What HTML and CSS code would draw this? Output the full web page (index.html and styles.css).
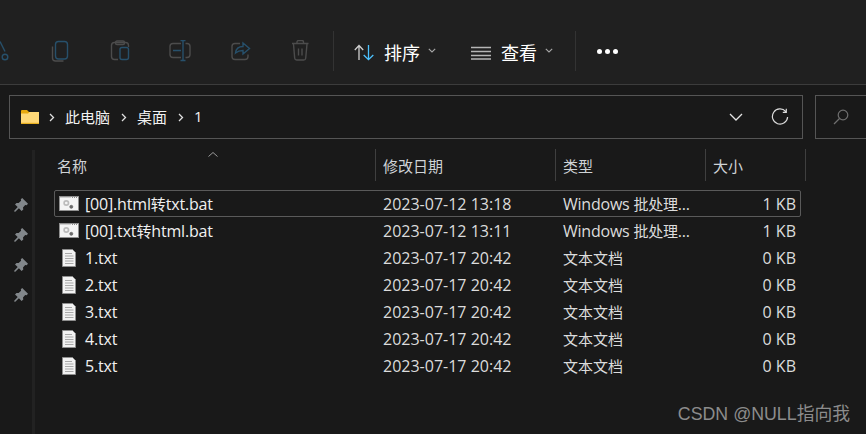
FILE: index.html
```html
<!DOCTYPE html>
<html lang="zh-CN">
<head>
<meta charset="utf-8">
<title>1</title>
<link rel="stylesheet" href="styles.css">
</head>
<body>
<div class="window">
  <header class="toolbar">
    <div class="tool-icons">
      <svg class="tool" viewBox="0 0 60 24"><path class="blue" d="M30 1.500l5 10"/><circle class="blue" cx="35" cy="17" r="2.800"/></svg>
      <svg class="tool" viewBox="0 0 60 24"><path class="dim" d="M22.500 6.500v11.500a3 3 0 0 0 3 3h8"/><rect class="blue" x="25.500" y="1.500" width="12" height="17.500" rx="3"/></svg>
      <svg class="tool" viewBox="0 0 60 24"><path class="dim" d="M28 19.500h-3.500a3 3 0 0 1-3-3v-11a3 3 0 0 1 3-3h11a3 3 0 0 1 3 3v1.500"/><rect class="dim" x="25.500" y="1" width="9" height="3.500" rx="1.500"/><rect class="blue" x="30" y="7.500" width="8.500" height="12" rx="2"/></svg>
      <svg class="tool" viewBox="0 0 60 24"><path class="dim" d="M31 3.500h-8a3 3 0 0 0-3 3v8a3 3 0 0 0 3 3h8M35.500 3.500h1.500a3 3 0 0 1 3 3v8a3 3 0 0 1-3 3h-1.500"/><path class="blue" d="M33 .500v20M30.500 .500h5M30.500 20.500h5M23 10.500h8"/></svg>
      <svg class="tool" viewBox="0 0 60 24"><path class="dim" d="M30 3.500h-5a3 3 0 0 0-3 3v10a3 3 0 0 0 3 3h10a3 3 0 0 0 3-3v-2"/><path class="blue" d="M25.500 13c.5-4.500 4-6.500 7.500-6.500V3l6.500 5.500L33 14v-3.500c-3 0-5.500.8-7.500 2.500z"/></svg>
      <svg class="tool" viewBox="0 0 60 24"><path class="dim" d="M22 3.500h16.500M27 3.500V2a1.500 1.500 0 0 1 1.500-1.500h3.500A1.500 1.500 0 0 1 33.500 2v1.500M23.500 4l1.200 14.200a2 2 0 0 0 2 1.800h7a2 2 0 0 0 2-1.800L37 4M28.500 8.500v7M32 8.500v7"/></svg>
    </div>
    <span class="divider first"></span>
    <div class="command sort">
      <svg class="cmd-icon" viewBox="0 0 21 17"><path class="white" d="M5 16V1.500M.8 6L5 1.500 9.200 6"/><path class="sky" d="M14.500 1v14.500M9.700 11l4.800 4.700 4.800-4.700"/></svg>
      <span class="cmd-label">排序</span>
      <svg class="chev" viewBox="0 0 8 5"><path d="M.8.800L4 4l3.200-3.200"/></svg>
    </div>
    <div class="command view">
      <svg class="cmd-icon lines" viewBox="0 0 20 14"><path d="M0 1.500h20M0 5.500h20M0 9.500h20M0 13h20"/></svg>
      <span class="cmd-label">查看</span>
      <svg class="chev" viewBox="0 0 8 5"><path d="M.8.800L4 4l3.200-3.200"/></svg>
    </div>
    <span class="divider"></span>
    <div class="more"><i></i><i></i><i></i></div>
  </header>

  <nav class="address-row">
    <div class="address">
      <svg class="folder" viewBox="0 0 18 14"><path fill="#e8a90f" d="M0 1a1 1 0 0 1 1-1h5l2 2h10v12H0z"/><path fill="#ffd978" d="M0 3.500h7l1.500-1.500H18v11H0z"/><rect fill="#e8b020" y="12.800" width="18" height="1.200"/></svg>
      <svg class="crumb-sep" viewBox="0 0 6 9"><path d="M1 1l3.500 3.500L1 8"/></svg>
      <span class="crumb">此电脑</span>
      <svg class="crumb-sep" viewBox="0 0 6 9"><path d="M1 1l3.500 3.500L1 8"/></svg>
      <span class="crumb">桌面</span>
      <svg class="crumb-sep" viewBox="0 0 6 9"><path d="M1 1l3.500 3.500L1 8"/></svg>
      <span class="crumb">1</span>
      <svg class="addr-down" viewBox="0 0 14 8"><path d="M1 1l6 6 6-6"/></svg>
      <svg class="refresh" viewBox="0 0 18 18"><path d="M14.800 3.600A7.600 7.600 0 1 0 16.600 9M15.300 .8v3.500h-3.500"/></svg>
    </div>
    <div class="search">
      <svg class="magnifier" viewBox="0 0 16 16"><circle cx="10" cy="6" r="4.800"/><path d="M6.500 9.500L1 15"/></svg>
    </div>
  </nav>

  <main class="content">
    <aside class="pins">
      <svg class="pin" viewBox="0 0 14 14"><use href="#pin"/></svg>
      <svg class="pin" viewBox="0 0 14 14"><use href="#pin"/></svg>
      <svg class="pin" viewBox="0 0 14 14"><use href="#pin"/></svg>
      <svg class="pin" viewBox="0 0 14 14"><use href="#pin"/></svg>
    </aside>
    <span class="splitter"></span>
    <section class="files">
      <div class="columns">
        <div class="col name">名称<svg class="caret" viewBox="0 0 10 5"><path d="M.5 4.500l4.500-4 4.500 4"/></svg></div>
        <div class="col">修改日期</div>
        <div class="col">类型</div>
        <div class="col">大小</div>
      </div>
      <div class="row selected">
        <div class="cell-name"><svg class="ico-bat" viewBox="0 0 20 15"><use href="#bat"/></svg><span>[00].html<span class="cjk">转</span>txt.bat</span></div>
        <div>2023-07-12 13:18</div><div class="cell-type">Windows <span class="cjk">批处理</span>...</div><div class="right">1 KB</div>
      </div>
      <div class="row">
        <div class="cell-name"><svg class="ico-bat" viewBox="0 0 20 15"><use href="#bat"/></svg><span>[00].txt<span class="cjk">转</span>html.bat</span></div>
        <div>2023-07-12 13:11</div><div class="cell-type">Windows <span class="cjk">批处理</span>...</div><div class="right">1 KB</div>
      </div>
      <div class="row">
        <div class="cell-name"><svg class="ico-txt" viewBox="0 0 14 18"><use href="#txt"/></svg>1.txt</div>
        <div>2023-07-17 20:42</div><div class="cjk">文本文档</div><div class="right">0 KB</div>
      </div>
      <div class="row">
        <div class="cell-name"><svg class="ico-txt" viewBox="0 0 14 18"><use href="#txt"/></svg>2.txt</div>
        <div>2023-07-17 20:42</div><div class="cjk">文本文档</div><div class="right">0 KB</div>
      </div>
      <div class="row">
        <div class="cell-name"><svg class="ico-txt" viewBox="0 0 14 18"><use href="#txt"/></svg>3.txt</div>
        <div>2023-07-17 20:42</div><div class="cjk">文本文档</div><div class="right">0 KB</div>
      </div>
      <div class="row">
        <div class="cell-name"><svg class="ico-txt" viewBox="0 0 14 18"><use href="#txt"/></svg>4.txt</div>
        <div>2023-07-17 20:42</div><div class="cjk">文本文档</div><div class="right">0 KB</div>
      </div>
      <div class="row">
        <div class="cell-name"><svg class="ico-txt" viewBox="0 0 14 18"><use href="#txt"/></svg>5.txt</div>
        <div>2023-07-17 20:42</div><div class="cjk">文本文档</div><div class="right">0 KB</div>
      </div>
    </section>
  </main>
  <div class="watermark">CSDN @NULL指向我</div>
</div>
<svg class="defs" width="0" height="0">
  <symbol id="pin" viewBox="0 0 14 14">
    <path d="M8.200 0L14 5.800 12.600 7.200 11.200 6.900 9 9.500 9.300 11.600 7.600 13 4.900 10.300 1 14 0 13 3.700 9.100 1 6.400 2.500 4.900 4.600 5.100 7.100 2.800 6.800 1.300z"/>
  </symbol>
  <symbol id="bat" viewBox="0 0 20 15">
    <rect x=".5" y=".5" width="19" height="14" fill="#f4f4f4" stroke="#909090"/>
    <path d="M1 1.500h11" stroke="#cfcfcf"/>
    <path d="M13 1.500h6" stroke="#8c8c8c" stroke-dasharray="1 1"/>
    <circle cx="7.300" cy="7" r="2.200" fill="none" stroke="#bcbcbc" stroke-width="1.700"/>
    <circle cx="12.300" cy="10.800" r="1.500" fill="#6a6a6a" stroke="#666" stroke-width=".8"/>
  </symbol>
  <symbol id="txt" viewBox="0 0 14 18">
    <path d="M.5.500h10l3 3v14H.5z" fill="#f2f2f2" stroke="#8e8e8e"/>
    <path d="M3 4.500h7M3 7h8.500M3 9.500h8.500M3 12h8.500M3 14.500h8.500" stroke="#a8a8a8" fill="none"/>
  </symbol>
</svg>
</body>
</html>
```

FILE: styles.css
```css
* { box-sizing: border-box; }
html, body { margin: 0; height: 100%; }
body {
  background: #191919;
  color: #e4e4e4;
  font-family: "Open Sans", "Noto Sans CJK SC", sans-serif;
  font-size: 16px;
  overflow: hidden;
}
.window { position: relative; width: 866px; height: 434px; overflow: hidden; }
.defs { position: absolute; }
.cjk { font-size: 15px; }

.toolbar {
  height: 85px;
  background: #202020;
  border-bottom: 1px solid #3c3c3c;
  display: flex;
  align-items: center;
  padding-top: 18px;
}
.tool-icons { display: flex; margin: 2px 0 0 -30px; }
.tool { width: 60px; height: 24px; display: block; flex: none; fill: none; stroke-width: 1.400; }
.dim { stroke: #4c4c4c; }
.blue { stroke: #27506b; }
.divider { width: 1px; height: 40px; background: #333; flex: none; }
.divider.first { margin-left: 3px; }
.command { display: flex; align-items: center; flex: none; color: #fff; font-size: 18px; margin-top: 3px; }
.sort { margin-left: 20px; }
.view { margin-left: 35px; margin-right: 22px; }
.cmd-icon { width: 21px; height: 17px; fill: none; stroke-width: 1.300; }
.cmd-icon.lines { width: 20px; height: 14px; stroke: #b5b5b5; stroke-width: 1.300; }
.white { stroke: #cfcfcf; }
.sky { stroke: #4cc2ff; }
.cmd-label { margin-left: 10px; line-height: 24px; }
.sort .cmd-label { margin-left: 9px; }
.chev { width: 8px; height: 5px; margin-left: 8px; margin-top: -5px; fill: none; stroke: #a8a8a8; stroke-width: 1.100; }
.more { display: flex; gap: 3px; margin-left: 21px; }
.more i { width: 5px; height: 5px; border-radius: 50%; background: #fff; display: block; }

.address-row { display: flex; padding: 10px 0 0 9px; gap: 12px; height: 65px; }
.address {
  width: 794px;
  height: 44px;
  border: 1px solid #555;
  display: flex;
  align-items: center;
  padding-left: 11px;
  flex: none;
  color: #f2f2f2;
  font-size: 15px;
}
.folder { width: 18px; height: 14px; flex: none; }
.crumb-sep { width: 6px; height: 9px; margin: 0 10px 0 10px; flex: none; fill: none; stroke: #e0e0e0; stroke-width: 1.300; }
.crumb { margin-bottom: 2px; }
.crumb + .crumb-sep { margin-left: 11px; }
.addr-down { width: 14px; height: 8px; margin-left: auto; margin-right: 28px; fill: none; stroke: #e4e4e4; stroke-width: 1.300; }
.refresh { width: 18px; height: 18px; margin-right: 13px; fill: none; stroke: #dcdcdc; stroke-width: 1.200; }
.search { flex: 1; margin-right: -20px; height: 44px; border: 1px solid #555; display: flex; align-items: center; padding-left: 17px; }
.magnifier { width: 16px; height: 16px; fill: none; stroke: #6f6f6f; stroke-width: 1.200; }

.content { display: flex; align-items: stretch; height: 284px; }
.pins { width: 32px; flex: none; display: flex; flex-direction: column; align-items: center; gap: 16px; padding: 48px 0 0 9px; }
.pin { width: 14px; height: 14px; fill: #82878b; flex: none; }
.splitter { width: 3px; background: #222; flex: none; }
.files { margin-left: 19px; width: 760px; }
.columns { display: grid; grid-template-columns: 322px 180px 150px 100px; height: 40px; padding-bottom: 8px; margin-top: -1px; color: #cfd3d6; font-size: 15px; }
.col { display: flex; align-items: center; border-right: 1px solid #3f3f3f; padding-left: 7px; position: relative; }
.col.name { padding-left: 3px; }
.caret { position: absolute; left: 154px; top: 3px; width: 10px; height: 5px; fill: none; stroke: #9a9a9a; }
.row { display: grid; grid-template-columns: 321px 180px 150px 96px; height: 27px; width: 747px; align-items: center; color: #dcdcdc; }
.columns + .row { margin-top: 1px; }
.row > div { padding-left: 8px; white-space: nowrap; }
.row > .cell-name { display: flex; align-items: center; padding-left: 5px; color: #f0f0f0; letter-spacing: -.17px; }
.row > .cell-type { letter-spacing: -.22px; }
.row > .right { text-align: right; padding: 0 5px 0 0; }
.selected { outline: 1px solid #5a5a5a; outline-offset: -1px; border-radius: 2px; }
.ico-bat { width: 20px; height: 15px; margin-right: 6px; flex: none; }
.ico-txt { width: 14px; height: 18px; margin: 0 9px 0 3px; flex: none; }

.watermark {
  position: absolute;
  right: 16px;
  bottom: 8px;
  font: 17.8px/24px "Liberation Sans", "Noto Sans CJK SC", sans-serif;
  color: #8c8c8c;
}
```
